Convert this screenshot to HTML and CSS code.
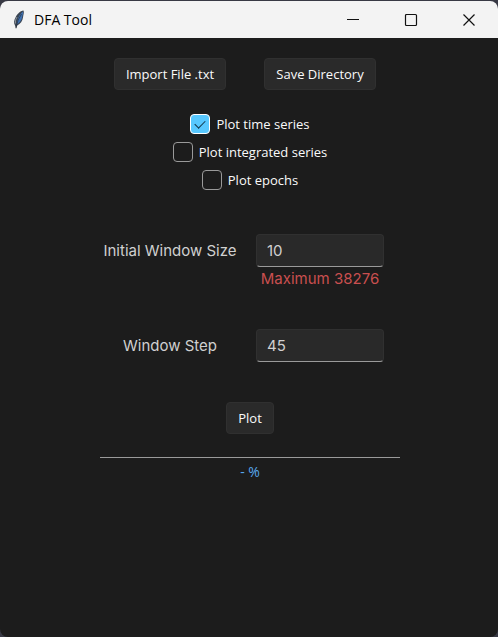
FILE: index.html
```html
<!DOCTYPE html>
<html lang="en">
<head>
<meta charset="utf-8">
<title>DFA Tool</title>
<link rel="stylesheet" href="styles.css">
</head>
<body>
<div class="window">
  <header class="titlebar">
    <svg class="feather" width="12" height="20" viewBox="0 0 12 20" aria-hidden="true">
      <path d="M10.500 .5C7 1 4 4 2.500 7.500C1 10 .5 13 2 15.500L3 19L4.200 15.500C7.500 14 9.500 11 10 7.500C10.200 5 11.500 2.500 10.500 .5Z" fill="#3a4553"/>
      <path d="M10 1.500C6.500 4.500 4.600 8 3.800 14.500C6.800 12.500 8.700 10 9.200 7C9.300 5 10.600 3.500 10 1.500Z" fill="#3f72b4"/>
      <path d="M8.500 4Q4.500 9 3 18" fill="none" stroke="#20242c" stroke-width=".6"/>
      <path d="M4 7Q1.800 10 2.500 13.500" fill="none" stroke="#8c9096" stroke-width="1"/>
    </svg>
    <h1 class="title">DFA Tool</h1>
    <div class="controls">
      <button class="control" type="button" aria-label="Minimize"><svg width="14" height="14" viewBox="0 0 14 14"><path d="M1 6.500H13"/></svg></button>
      <button class="control" type="button" aria-label="Maximize"><svg width="14" height="14" viewBox="0 0 14 14"><rect x="1.500" y="1.500" width="11" height="11" rx="1"/></svg></button>
      <button class="control" type="button" aria-label="Close"><svg width="14" height="14" viewBox="0 0 14 14"><path d="M1.500 1.500L12.500 12.500M12.500 1.500L1.500 12.500"/></svg></button>
    </div>
  </header>
  <main class="content">
    <div class="columns">
      <button class="button" type="button">Import File .txt</button>
      <button class="button" type="button">Save Directory</button>
    </div>
    <div class="checks">
      <label class="check"><input type="checkbox" checked>Plot time series</label>
      <label class="check"><input type="checkbox">Plot integrated series</label>
      <label class="check"><input type="checkbox">Plot epochs</label>
    </div>
    <div class="columns fields">
      <label class="label" for="size">Initial Window Size</label>
      <div class="field">
        <input class="entry" id="size" type="text" value="10" aria-describedby="limit">
        <span class="limit" id="limit">Maximum 38276</span>
      </div>
      <label class="label" for="step">Window Step</label>
      <div class="field">
        <input class="entry" id="step" type="text" value="45">
      </div>
    </div>
    <button class="button" type="button">Plot</button>
    <div class="progress" role="progressbar" aria-label="Plot progress"></div>
    <span class="percent">- %</span>
  </main>
</div>
</body>
</html>
```
FILE: styles.css
```css
* {
  box-sizing: border-box;
}

body {
  margin: 0;
  background: #383944;
  color: #fafafa;
  font: 13px/20px "Open Sans", "Noto Sans", sans-serif;
}

.window {
  display: flex;
  flex-direction: column;
  min-height: 100vh;
  padding-top: 1px;
  border-radius: 8px;
  overflow: hidden;
}

.titlebar {
  display: flex;
  align-items: center;
  height: 37px;
  padding-left: 13px;
  background: #f3f3f3;
  color: #000;
  border-radius: 8px 8px 0 0;
}

.title {
  margin: 0 0 0 9px;
  font-size: 14px;
  font-weight: 400;
}

.controls {
  display: flex;
  margin-left: auto;
}

.control {
  display: grid;
  place-items: center;
  width: 58px;
  height: 37px;
  padding: 0;
  border: 0;
  background: none;
}

.control svg {
  fill: none;
  stroke: #111;
  stroke-width: 1.2;
}

.content {
  display: flex;
  flex: 1;
  flex-direction: column;
  align-items: center;
  padding: 20px 0 20px 2px;
  background: #1c1c1c;
}

.columns {
  display: grid;
  grid-template-columns: 140px 160px;
  justify-items: center;
}

.button {
  height: 32px;
  padding: 0 11px;
  border: 1px solid #303030;
  border-radius: 4px;
  background: #2a2a2a;
  color: inherit;
  font: inherit;
}

.checks {
  display: flex;
  flex-direction: column;
  align-items: center;
  gap: 8px;
  margin-top: 24px;
}

.check {
  display: flex;
  align-items: center;
  gap: 6px;
}

.check input {
  appearance: none;
  width: 20px;
  height: 20px;
  margin: 0;
  border: 1px solid #9a9a9a;
  border-radius: 4px;
}

.check input:checked {
  display: grid;
  place-items: center;
  border-color: #fff;
  background: #57c8ff;
}

.check input:checked::before {
  content: "";
  width: 9px;
  height: 5px;
  margin-bottom: 3px;
  border: solid #12384c;
  border-width: 0 0 1px 1px;
  transform: rotate(-45deg);
}

.fields {
  row-gap: 38px;
  margin: 44px 0 40px;
  color: #d0d0d0;
  font: 15px/24px Inter, sans-serif;
}

.label {
  line-height: 33px;
}

.field {
  display: flex;
  flex-direction: column;
  align-items: center;
}

.entry {
  width: 128px;
  height: 33px;
  padding: 0 10px;
  border: 1px solid #303030;
  border-bottom-color: #9a9a9a;
  border-radius: 4px;
  background: #292929;
  color: inherit;
  font: inherit;
}

.limit {
  color: #c94f4f;
}

.progress {
  width: 300px;
  height: 1px;
  margin-top: 23px;
  background: #9a9a9a;
}

.percent {
  margin-top: 4px;
  color: #57a8ef;
  font-size: 14px;
}
```
